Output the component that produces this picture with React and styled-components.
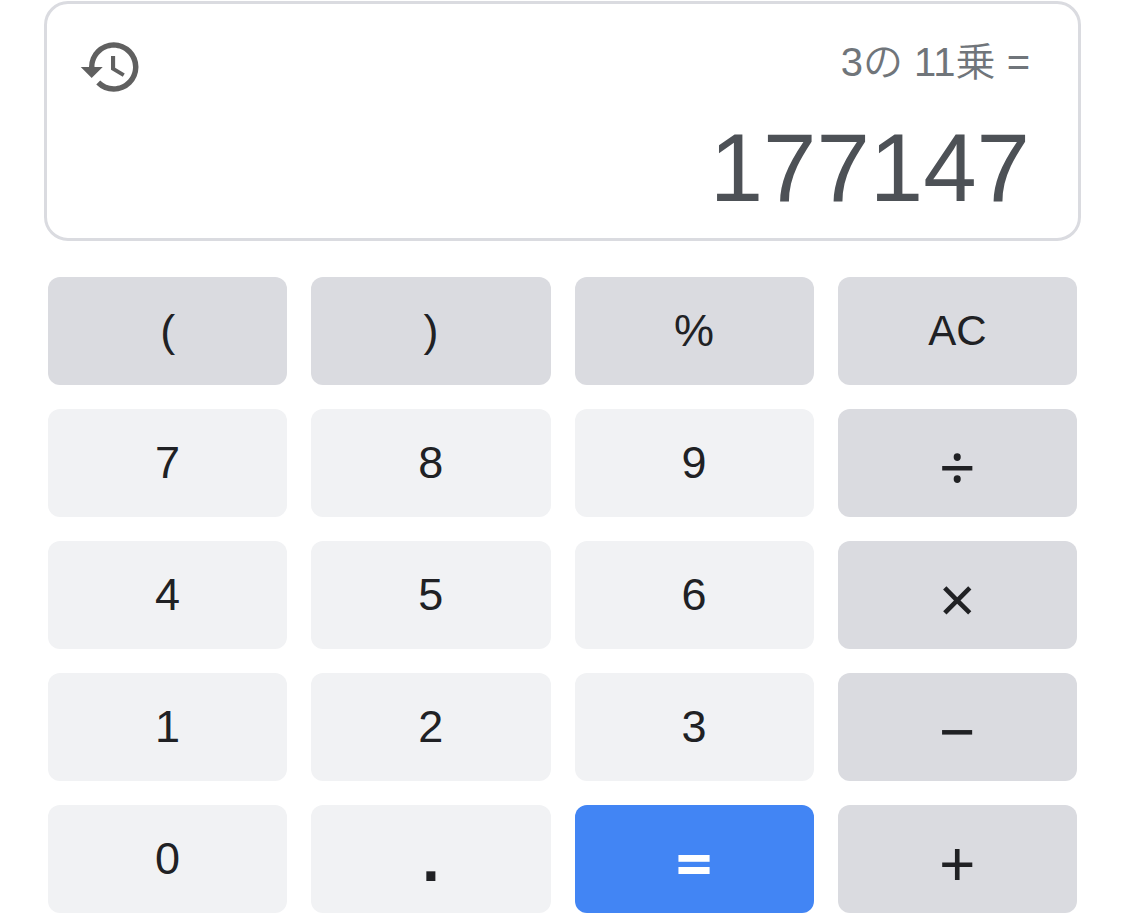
import styled, { createGlobalStyle } from "styled-components";
import { MdHistory } from "react-icons/md";

const GlobalStyle = createGlobalStyle`
	body {
		margin: 0;
		background: #fff;
		font-family: "Liberation Sans", "Noto Sans CJK JP", sans-serif;
	}
`;

const Calculator = styled.main`
	padding: 1px 44px 6px;
`;

const Display = styled.section`
	display: flex;
	justify-content: space-between;
	align-items: flex-start;
	box-sizing: border-box;
	height: 240px;
	padding: 30px 48px 0 31px;
	border: 3px solid #dadbe0;
	border-radius: 24px;
`;

const HistoryButton = styled.button`
	display: flex;
	padding: 0;
	border: 0;
	background: none;
	color: #606060;
	cursor: pointer;
`;

const Readout = styled.div`
	display: flex;
	flex-direction: column;
	align-items: flex-end;
`;

const Expression = styled.div`
	font-size: 40px;
	font-weight: 350;
	line-height: 56px;
	color: #70757a;
`;

const Result = styled.output`
	margin-top: 18px;
	font-size: 96px;
	line-height: 120px;
	color: #4d5156;
`;

const Keypad = styled.div`
	display: grid;
	grid-template-columns: repeat(4, 1fr);
	gap: 24px;
	padding: 36px 4px 0;
`;

const Key = styled.button`
	height: 108px;
	padding: 0;
	border: 0;
	border-radius: 12px;
	background: #f1f2f4;
	color: #202124;
	font-family: inherit;
	font-size: 45px;
	line-height: 108px;
	cursor: pointer;
`;

const FunctionKey = styled(Key)`
	background: #dadbe0;
	font-size: ${(props) => (props.$small ? "42px" : "45px")};
`;

const OperatorKey = styled(Key)`
	padding-top: 8px;
	background: #dadbe0;
	font-family: "Noto Sans", sans-serif;
	font-size: 64px;
	line-height: 100px;
`;

const PointKey = styled(Key)`
	font-size: 64px;
	font-weight: 700;
`;

const EqualsKey = styled(OperatorKey)`
	background: #4285f4;
	color: #fff;
	font-weight: 700;
`;

const App = () => {
	return (
		<>
			<GlobalStyle />
			<Calculator>
				<Display>
					<HistoryButton aria-label="履歴">
						<MdHistory size={66} />
					</HistoryButton>
					<Readout>
						<Expression>3の 11乗 =</Expression>
						<Result>177147</Result>
					</Readout>
				</Display>
				<Keypad>
					<FunctionKey>(</FunctionKey>
					<FunctionKey>)</FunctionKey>
					<FunctionKey>%</FunctionKey>
					<FunctionKey $small>AC</FunctionKey>
					<Key>7</Key>
					<Key>8</Key>
					<Key>9</Key>
					<OperatorKey>÷</OperatorKey>
					<Key>4</Key>
					<Key>5</Key>
					<Key>6</Key>
					<OperatorKey>×</OperatorKey>
					<Key>1</Key>
					<Key>2</Key>
					<Key>3</Key>
					<OperatorKey>−</OperatorKey>
					<Key>0</Key>
					<PointKey>.</PointKey>
					<EqualsKey>=</EqualsKey>
					<OperatorKey>+</OperatorKey>
				</Keypad>
			</Calculator>
		</>
	);
};

export default App;
